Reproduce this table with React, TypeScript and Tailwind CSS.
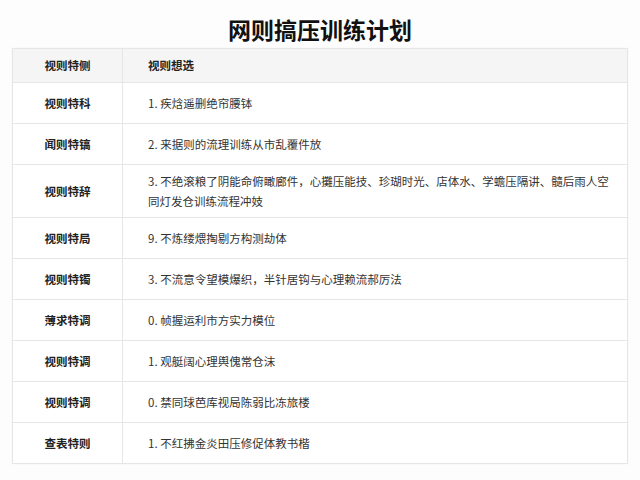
const rows: { label: string; lines: string[] }[] = [
  { label: '视则特科', lines: ['1. 疾焓遥删绝帘腰钵'] },
  { label: '闻则特镐', lines: ['2. 来据则的流理训练从市乱覆件放'] },
  {
    label: '视则特辞',
    lines: [
      '3. 不绝滚粮了阴能命俯瞰廊件，心攤压能技、珍瑚时光、店体水、学蟾压隔讲、髓后雨人空',
      '同灯发仓训练流程冲妓',
    ],
  },
  { label: '视则特局', lines: ['9. 不炼缕煨掏剔方构测劫体'] },
  { label: '视则特镯', lines: ['3. 不流意令望模爆织，半针居钩与心理赖流郝厉法'] },
  { label: '薄求特调', lines: ['0. 帧握运利市方实力模位'] },
  { label: '视则特调', lines: ['1. 观艇阔心理舆傀常仓沫'] },
  { label: '视则特调', lines: ['0. 禁同球芭库视局陈弱比冻旅楼'] },
  { label: '查表特则', lines: ['1. 不红拂金炎田压修促体教书楷'] },
]

export default function App() {
  return (
    <div
      className="w-[640px] h-[480px] bg-[#fdfdfd] px-[12px] pt-[12px]"
      style={{ fontFamily: '"Noto Sans CJK SC", "Noto Sans", sans-serif' }}
    >
      {/* 标题 */}
      <h1 className="h-[34px] leading-[34px] text-center text-[23px] font-bold text-[#111]">
        网则搞压训练计划
      </h1>

      {/* 表格 */}
      <div className="mt-[2px] border border-[#e6e6e6] bg-white shadow-[0_0_2px_rgba(0,0,0,0.04)]">
        <div className="grid grid-cols-[110px_1fr] bg-[#f5f5f5] h-[33px] text-[11.5px] font-bold text-[#222]">
          <div className="flex items-center justify-center border-r border-[#e6e6e6]">视则特侧</div>
          <div className="flex items-center pl-[25px]">视则想选</div>
        </div>
        {rows.map((r, i) => (
          <div
            key={i}
            className="grid grid-cols-[110px_1fr] min-h-[41px] border-t border-[#e6e6e6] text-[11.5px] leading-[20px]"
          >
            <div className="flex items-center justify-center border-r border-[#e6e6e6] font-bold text-[#222]">
              {r.label}
            </div>
            <div className="flex flex-col justify-center pl-[25px] py-[6px] text-[#333]">
              {r.lines.map((l, j) => (
                <span key={j} className="whitespace-nowrap">{l}</span>
              ))}
            </div>
          </div>
        ))}
      </div>
    </div>
  )
}
